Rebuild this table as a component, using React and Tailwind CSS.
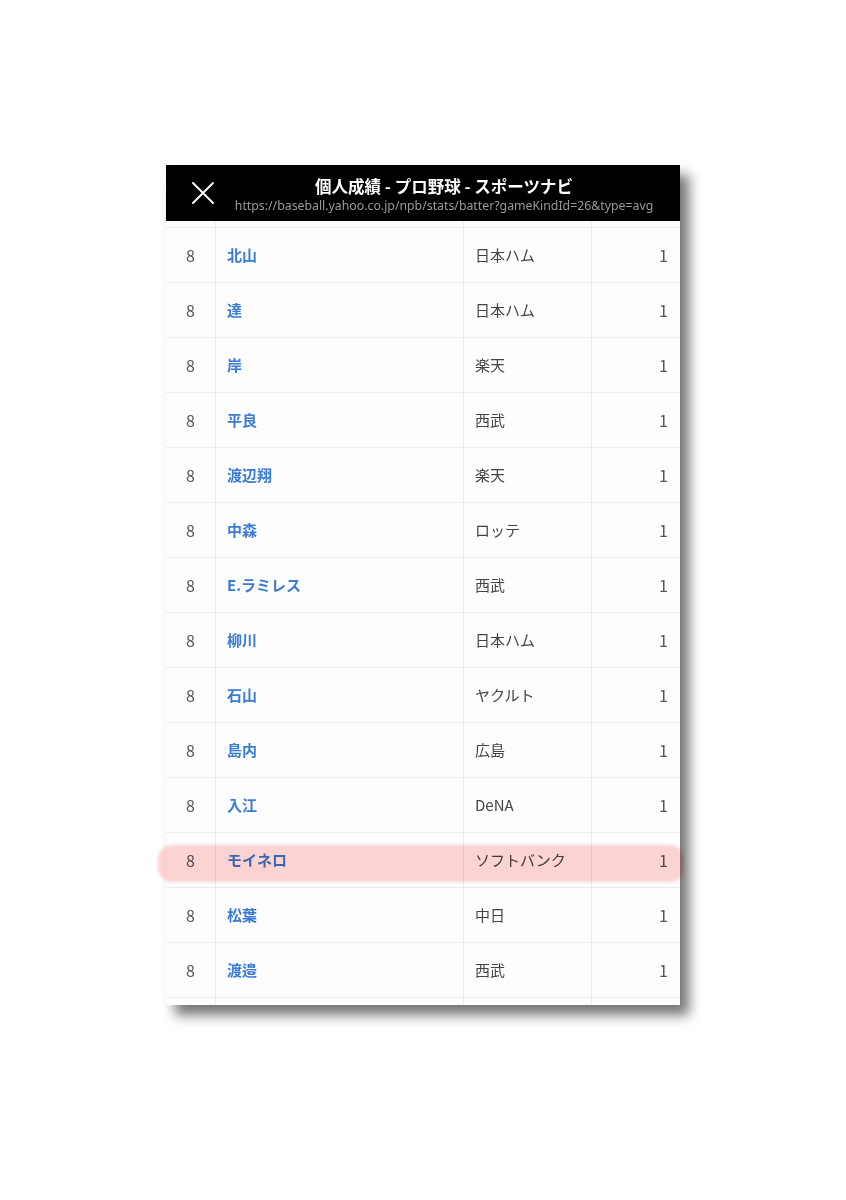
import React from "react";

const rows = [
  { name: "北山", team: "日本ハム" },
  { name: "達", team: "日本ハム" },
  { name: "岸", team: "楽天" },
  { name: "平良", team: "西武" },
  { name: "渡辺翔", team: "楽天" },
  { name: "中森", team: "ロッテ" },
  { name: "E.ラミレス", team: "西武" },
  { name: "柳川", team: "日本ハム" },
  { name: "石山", team: "ヤクルト" },
  { name: "島内", team: "広島" },
  { name: "入江", team: "DeNA" },
  { name: "モイネロ", team: "ソフトバンク" },
  { name: "松葉", team: "中日" },
  { name: "渡邉", team: "西武" },
];

const Row = ({ name, team, h = "h-[55px]" }) => (
  <div className={`flex ${h} border-b border-[#ececec] bg-[#fdfdfd] overflow-hidden`}>
    <div className="w-[50px] shrink-0 flex items-center justify-center text-[16px] text-[#555] border-r border-[#ececec]">
      {name !== undefined && "8"}
    </div>
    <div className="w-[248px] shrink-0 flex items-center pl-[11px] text-[15px] font-bold text-[#3a7bd5] border-r border-[#ececec]">
      {name}
    </div>
    <div className="w-[128px] shrink-0 flex items-center pl-[11px] text-[15px] text-[#444] border-r border-[#ececec]">
      {team}
    </div>
    <div className="flex-1 flex items-center justify-end pr-[12px] text-[16px] text-[#555]">
      {name !== undefined && "1"}
    </div>
  </div>
);

export default function App() {
  return (
    <div
      className="relative min-h-[1200px] bg-white pt-[165px] pl-[166px]"
      style={{ fontFamily: '"Noto Sans CJK JP", "Noto Sans", sans-serif' }}
    >
      <div className="w-[514px] h-[840px] overflow-hidden bg-white shadow-[9px_10px_12px_rgba(0,0,0,0.55)]">
        {/* header */}
        <div className="flex h-[56px] bg-black items-center">
          <div className="w-[62px] shrink-0 flex justify-center pl-[12px]">
            <svg width="24" height="24" viewBox="0 0 24 24" stroke="white" strokeWidth="2" strokeLinecap="round">
              <path d="M2 2 L22 22 M22 2 L2 22" />
            </svg>
          </div>
          <div className="flex-1 pr-[20px] pt-[3px] flex flex-col items-center gap-[1px] leading-tight">
            <div className="text-[16.5px] font-bold text-white">個人成績 - プロ野球 - スポーツナビ</div>
            <div className="text-[12.3px] text-[#9a9a9a] whitespace-nowrap" style={{ fontFamily: '"Noto Sans", sans-serif' }}>
              https://baseball.yahoo.co.jp/npb/stats/batter?gameKindId=26&amp;type=avg
            </div>
          </div>
        </div>
        {/* table */}
        <Row h="h-[7px]" />
        {rows.map((r) => (
          <Row key={r.name} name={r.name} team={r.team} />
        ))}
        <Row h="h-[20px]" />
      </div>
      {/* marker highlight */}
      <div className="absolute left-[158px] top-[845px] w-[526px] h-[37px] rounded-[14px] bg-[rgba(250,150,150,0.4)] mix-blend-multiply blur-[1.5px]" />
    </div>
  );
}
